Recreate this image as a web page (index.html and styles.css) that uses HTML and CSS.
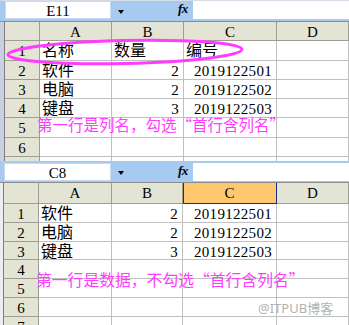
FILE: index.html
```html
<!DOCTYPE html>
<html lang="zh">
<head>
<meta charset="utf-8">
<title>首行含列名</title>
<link rel="stylesheet" href="styles.css">
</head>
<body>
<div class="page">
  <section class="sheet sheet-top">
    <div class="namebar">
      <div class="namebox">E11</div>
      <div class="dropzone"><span class="arrow"></span></div>
      <div class="fx">fx</div>
      <div class="formula"></div>
    </div>
    <div class="grid">
      <div class="strip"></div>
      <div class="c h corner"></div><div class="c h ch">A</div><div class="c h ch">B</div><div class="c h ch">C</div><div class="c h ch">D</div>
      <div class="c h rh">1</div><div class="c cjk">名称</div><div class="c cjk">数量</div><div class="c cjk">编号</div><div class="c"></div>
      <div class="c h rh">2</div><div class="c cjk">软件</div><div class="c num">2</div><div class="c num">2019122501</div><div class="c"></div>
      <div class="c h rh">3</div><div class="c cjk">电脑</div><div class="c num">2</div><div class="c num">2019122502</div><div class="c"></div>
      <div class="c h rh">4</div><div class="c cjk">键盘</div><div class="c num">3</div><div class="c num">2019122503</div><div class="c"></div>
      <div class="c h rh">5</div><div class="c"></div><div class="c"></div><div class="c"></div><div class="c"></div>
      <div class="c h rh">6</div><div class="c"></div><div class="c"></div><div class="c"></div><div class="c"></div>
      <div class="c h rh">7</div><div class="c"></div><div class="c"></div><div class="c"></div><div class="c"></div>
    </div>
    <svg class="ring" width="260" height="40" viewBox="0 0 260 40">
      <ellipse cx="125" cy="20" rx="117" ry="11.5" transform="rotate(-1.3 125 20)" fill="none" stroke="#ff3cff" stroke-width="3"/>
    </svg>
    <div class="note note-top">第一行是列名，勾选“首行含列名”</div>
  </section>

  <section class="sheet sheet-bottom">
    <div class="namebar">
      <div class="namebox">C8</div>
      <div class="dropzone"><span class="arrow"></span></div>
      <div class="fx">fx</div>
      <div class="formula"></div>
    </div>
    <div class="grid">
      <div class="strip"></div>
      <div class="c h corner"></div><div class="c h ch">A</div><div class="c h ch">B</div><div class="c h ch sel">C</div><div class="c h ch">D</div>
      <div class="c h rh">1</div><div class="c cjk">软件</div><div class="c num">2</div><div class="c num">2019122501</div><div class="c"></div>
      <div class="c h rh">2</div><div class="c cjk">电脑</div><div class="c num">2</div><div class="c num">2019122502</div><div class="c"></div>
      <div class="c h rh">3</div><div class="c cjk">键盘</div><div class="c num">3</div><div class="c num">2019122503</div><div class="c"></div>
      <div class="c h rh">4</div><div class="c"></div><div class="c"></div><div class="c"></div><div class="c"></div>
      <div class="c h rh">5</div><div class="c"></div><div class="c"></div><div class="c"></div><div class="c"></div>
      <div class="c h rh">6</div><div class="c"></div><div class="c"></div><div class="c"></div><div class="c"></div>
      <div class="c h rh">7</div><div class="c"></div><div class="c"></div><div class="c"></div><div class="c"></div>
    </div>
    <div class="note note-bottom">第一行是数据，不勾选“首行含列名”</div>
    <div class="watermark">@ITPUB博客</div>
  </section>
</div>
</body>
</html>
```

FILE: styles.css
```css
html, body {
  margin: 0;
  padding: 0;
  background: #ffffff;
}

.page {
  width: 349px;
  height: 325px;
  overflow: hidden;
  font-family: "Liberation Serif", "Noto Sans CJK SC", serif;
  color: #000;
}

.sheet {
  position: relative;
  overflow: hidden;
}

.sheet-top { height: 161px; }
.sheet-bottom { height: 164px; }

/* ---------- name / formula bar ---------- */
.namebar {
  display: flex;
  height: 21px;
  box-sizing: border-box;
  background: #a6caf0;
  padding-top: 1px;
}

.sheet-top .namebar { border-top: 1px solid #d4dde8; padding-top: 0; }
.sheet-bottom .namebar { padding-top: 2px; }

.namebox {
  width: 106px;
  height: 18px;
  box-sizing: border-box;
  margin-left: 5px;
  background: #fff;
  border: 1px solid #c6dbf3;
  font-size: 15px;
  line-height: 16px;
  text-align: center;
  padding-top: 1px;
}

.sheet-bottom .namebox { margin-left: 4px; width: 107px; }

.dropzone {
  width: 67px;
  display: flex;
  align-items: center;
  padding-left: 7px;
  box-sizing: border-box;
}

.arrow {
  width: 0;
  height: 0;
  border-left: 3.5px solid transparent;
  border-right: 3.5px solid transparent;
  border-top: 4px solid #000;
  margin-top: 1px;
}

.fx {
  width: 15px;
  font-family: "Liberation Serif", serif;
  font-style: italic;
  font-weight: bold;
  font-size: 13px;
  line-height: 16px;
  letter-spacing: -0.5px;
}

.formula {
  flex: 1;
  height: 18px;
  background: #fff;
}

/* ---------- grid ---------- */
.grid {
  display: grid;
  border-top: 1px solid #8c8c8c;
}

.sheet-top .grid {
  grid-template-columns: 5px 35px 72px 72px 93px 72px;
  grid-template-rows: 19px 20px 19px 19px 19px 20px 19px 10px;
}

.sheet-bottom .grid {
  grid-template-columns: 4px 35px 73px 71px 94px 72px;
  grid-template-rows: 21px 19px 19px 18px 19px 19px 19px 10px;
}

.strip {
  grid-row: 1 / span 8;
  grid-column: 1;
  background: #c9d0e2;
  border-right: 1px solid #7e7e7e;
}

.sheet-bottom .strip { background: #eceef4; }

.c {
  box-sizing: border-box;
  border-right: 1px solid #c0c0c0;
  border-bottom: 1px solid #c0c0c0;
  font-size: 15px;
  line-height: 16px;
  padding: 2px 2px 0 2px;
  white-space: nowrap;
}

.h {
  background: #e4e4d4;
  border-color: #9d9d93;
  text-align: center;
}

.rh { padding-left: 0; padding-right: 0; }

.cjk {
  font-family: "Noto Sans CJK SC", sans-serif;
  font-size: 16px;
  padding-top: 0;
  line-height: 17px;
  padding-left: 2px;
}

.num {
  text-align: right;
  padding-right: 4px;
  letter-spacing: 0.3px;
}

.sel {
  background: #ffc86e;
  border-right: 1px solid #1c2a8c;
  border-bottom: 1px solid #1c2a8c;
  box-shadow: inset 1px 0 0 #1c2a8c;
}

/* ---------- overlays ---------- */
.ring {
  position: absolute;
  left: 0;
  top: 32px;
}

.note {
  position: absolute;
  color: #ff3cff;
  font-family: "Noto Sans CJK SC", sans-serif;
  white-space: nowrap;
  line-height: 1;
}

.note-top {
  left: 37px;
  top: 117px;
  font-size: 15.5px;
}

.note-bottom {
  left: 36px;
  top: 111px;
  font-size: 15.8px;
}

.watermark {
  position: absolute;
  left: 258px;
  top: 141px;
  font-family: "Noto Sans", "Noto Sans CJK SC", sans-serif;
  font-size: 13px;
  line-height: 1;
  color: #b2b2b2;
  white-space: nowrap;
}
```
